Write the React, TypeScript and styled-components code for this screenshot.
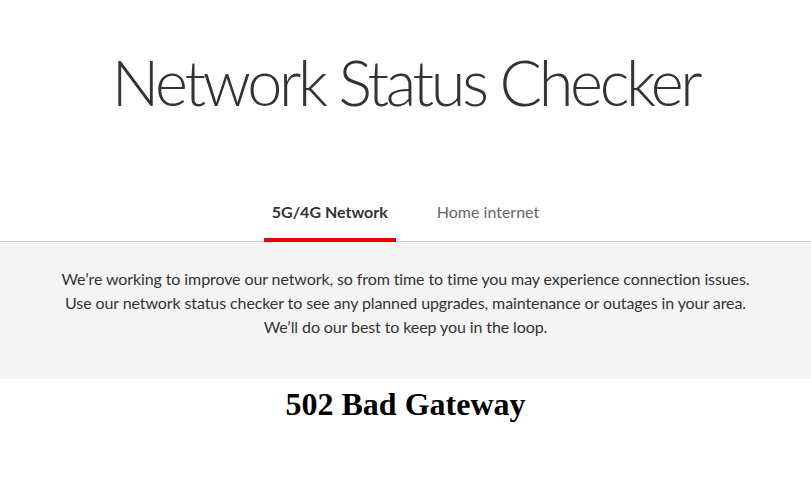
import styled, { createGlobalStyle } from 'styled-components';

const GlobalStyle = createGlobalStyle`
  body {
    margin: 0;
    background: #ffffff;
  }
`;

// Page header
const Header = styled.header`
  display: flex;
  justify-content: center;
  padding-top: 40px;
`;

const Title = styled.h1`
  margin: 0;
  font-family: Lato, 'Liberation Sans', sans-serif;
  font-weight: 300;
  font-size: 63px;
  letter-spacing: -3.3px;
  line-height: 84px;
  color: #333333;
`;

// Tabs
const TabBar = styled.nav`
  display: flex;
  justify-content: center;
  gap: 33px;
  margin-top: 68px;
  border-bottom: 1px solid #cccccc;
`;

const Tab = styled.a<{ $active?: boolean }>`
  display: block;
  padding: 10px 8px 17px;
  font-family: Lato, 'Liberation Sans', sans-serif;
  font-size: 16px;
  font-weight: ${p => (p.$active ? 700 : 400)};
  color: ${p => (p.$active ? '#333333' : '#666666')};
  text-decoration: none;
  border-bottom: 4px solid ${p => (p.$active ? '#e60000' : 'transparent')};
  margin-bottom: -1px;
`;

// Info panel
const Panel = styled.section`
  background: #f4f4f4;
  padding: 25px 20px 40px;
  text-align: center;
`;

const Message = styled.p`
  margin: 0;
  font-family: Lato, 'Liberation Sans', sans-serif;
  font-size: 16px;
  letter-spacing: -0.1px;
  line-height: 24px;
  color: #333333;
`;

const ErrorTitle = styled.h1`
  margin: 7px 0 0;
  text-align: center;
  font-family: 'Liberation Serif', serif;
  font-size: 32px;
  font-weight: 700;
  color: #000000;
`;

const App = () => {
  return (
    <>
      <GlobalStyle />
      <Header>
        <Title>Network Status Checker</Title>
      </Header>
      <TabBar>
        <Tab $active href="#">5G/4G Network</Tab>
        <Tab href="#">Home internet</Tab>
      </TabBar>
      <Panel>
        <Message>
          We’re working to improve our network, so from time to time you may experience connection issues.
          <br />
          Use our network status checker to see any planned upgrades, maintenance or outages in your area.
          <br />
          We’ll do our best to keep you in the loop.
        </Message>
      </Panel>
      <ErrorTitle>502 Bad Gateway</ErrorTitle>
    </>
  );
};

export default App;
